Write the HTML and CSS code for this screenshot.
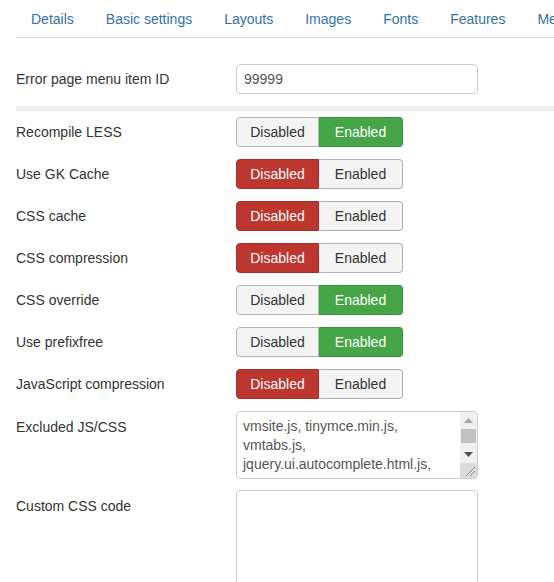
FILE: index.html
```html
<!DOCTYPE html>
<html>
<head>
<meta charset="utf-8">
<link rel="stylesheet" href="styles.css">
</head>
<body>
<div class="page">
  <ul class="tabs">
    <li><a>Details</a></li>
    <li><a>Basic settings</a></li>
    <li><a>Layouts</a></li>
    <li><a>Images</a></li>
    <li><a>Fonts</a></li>
    <li><a>Features</a></li>
    <li><a>Menus</a></li>
  </ul>
  <div class="form">
    <div class="row">
      <label class="lbl">Error page menu item ID</label>
      <input class="text" type="text" value="99999">
    </div>
    <div class="sep"></div>
    <div class="row">
      <label class="lbl">Recompile LESS</label>
      <div class="toggle"><span class="opt off">Disabled</span><span class="opt on green">Enabled</span></div>
    </div>
    <div class="row">
      <label class="lbl">Use GK Cache</label>
      <div class="toggle"><span class="opt on red">Disabled</span><span class="opt off">Enabled</span></div>
    </div>
    <div class="row">
      <label class="lbl">CSS cache</label>
      <div class="toggle"><span class="opt on red">Disabled</span><span class="opt off">Enabled</span></div>
    </div>
    <div class="row">
      <label class="lbl">CSS compression</label>
      <div class="toggle"><span class="opt on red">Disabled</span><span class="opt off">Enabled</span></div>
    </div>
    <div class="row">
      <label class="lbl">CSS override</label>
      <div class="toggle"><span class="opt off">Disabled</span><span class="opt on green">Enabled</span></div>
    </div>
    <div class="row">
      <label class="lbl">Use prefixfree</label>
      <div class="toggle"><span class="opt off">Disabled</span><span class="opt on green">Enabled</span></div>
    </div>
    <div class="row">
      <label class="lbl">JavaScript compression</label>
      <div class="toggle"><span class="opt on red">Disabled</span><span class="opt off">Enabled</span></div>
    </div>
    <div class="row top">
      <label class="lbl">Excluded JS/CSS</label>
      <div class="areabox">
        <textarea class="inner">vmsite.js, tinymce.min.js, vmtabs.js, jquery.ui.autocomplete.html.js, vmprices.js</textarea>
        <div class="sbar">
          <div class="sbtn">
            <svg width="9" height="5" viewBox="0 0 9 5"><polygon points="0,5 4.5,0 9,5" fill="#a3a3a3"/></svg>
          </div>
          <div class="track"><div class="thumb"></div></div>
          <div class="sbtn">
            <svg width="9" height="5" viewBox="0 0 9 5"><polygon points="0,0 9,0 4.5,5" fill="#505050"/></svg>
          </div>
          <div class="corner">
            <svg width="17" height="17" viewBox="0 0 17 17"><line x1="15" y1="6" x2="6" y2="15" stroke="#8a8a8a" stroke-width="1"/><line x1="15" y1="10" x2="10" y2="15" stroke="#8a8a8a" stroke-width="1"/></svg>
          </div>
        </div>
      </div>
    </div>
    <div class="row top last">
      <label class="lbl">Custom CSS code</label>
      <textarea class="area big"></textarea>
    </div>
  </div>
</div>
</body>
</html>
```

FILE: styles.css
```css
html, body {
  margin: 0;
  padding: 0;
  background: #fff;
  overflow: hidden;
}
body {
  font-family: "Liberation Sans", Arial, sans-serif;
  font-size: 14px;
  line-height: 20px;
  color: #333;
}
.page {
  padding: 1px 0 0 16px;
  white-space: nowrap;
}
.tabs {
  display: flex;
  margin: 0;
  padding: 0;
  list-style: none;
  border-bottom: 1px solid #ddd;
  overflow: hidden;
}
.tabs li {
  flex: none;
}
.tabs a {
  display: block;
  padding: 8px 15px;
  margin-right: 2px;
  color: #3071a9;
}
.form {
  margin-top: 26px;
}
.row {
  display: flex;
  align-items: center;
  margin-bottom: 12px;
}
.row.top {
  align-items: flex-start;
  margin-bottom: 11px;
}
.row.top .lbl {
  padding-top: 6px;
}
.lbl {
  flex: none;
  width: 220px;
}
.text {
  box-sizing: border-box;
  width: 242px;
  height: 30px;
  margin: 0;
  padding: 0 7px;
  border: 1px solid #ccc;
  border-radius: 4px;
  font-family: "Liberation Sans", Arial, sans-serif;
  font-size: 14px;
  color: #555;
  outline: none;
}
.sep {
  height: 5px;
  background: #eee;
  margin: 0 0 6px;
}
.toggle {
  display: flex;
}
.opt {
  box-sizing: border-box;
  height: 30px;
  line-height: 28px;
  text-align: center;
  border: 1px solid #b3b3b3;
}
.opt:first-child {
  width: 83px;
  border-radius: 4px 0 0 4px;
}
.opt:last-child {
  width: 84px;
  border-left: none;
  border-radius: 0 4px 4px 0;
}
.off {
  background: #f3f3f3;
  color: #333;
}
.red {
  background: #bd362f;
  border-color: #a5302a;
  color: #fff;
}
.green {
  background: #46a546;
  border-color: #3d913d;
  color: #fff;
}
.areabox {
  box-sizing: border-box;
  display: flex;
  width: 242px;
  height: 68px;
  border: 1px solid #ccc;
  border-radius: 4px;
  overflow: hidden;
  background: #fff;
}
.inner {
  flex: 1;
  min-width: 0;
  box-sizing: border-box;
  height: 63px;
  margin: 0;
  padding: 5px 6px 0;
  border: none;
  resize: none;
  overflow: hidden;
  font-family: "Liberation Sans", Arial, sans-serif;
  font-size: 14px;
  line-height: 19px;
  color: #555;
  outline: none;
  white-space: pre-wrap;
  background: transparent;
}
.sbar {
  flex: none;
  width: 17px;
  display: flex;
  flex-direction: column;
  background: #f0f0f0;
}
.sbtn {
  flex: none;
  height: 17px;
  display: flex;
  align-items: center;
  justify-content: center;
}
.sbtn svg {
  display: block;
}
.track {
  flex: 1;
  padding: 0 1px;
}
.thumb {
  height: 14px;
  background: #c1c1c1;
}
.corner {
  flex: none;
  height: 15px;
  background: #dcdcdc;
  overflow: hidden;
}
.corner svg {
  display: block;
  margin-top: -2px;
}
.area {
  box-sizing: border-box;
  width: 242px;
  margin: 0;
  padding: 6px 6px;
  border: 1px solid #ccc;
  border-radius: 4px;
  font-family: "Liberation Sans", Arial, sans-serif;
  font-size: 14px;
  line-height: 18px;
  color: #555;
  outline: none;
}
.area.big {
  height: 160px;
}
```
